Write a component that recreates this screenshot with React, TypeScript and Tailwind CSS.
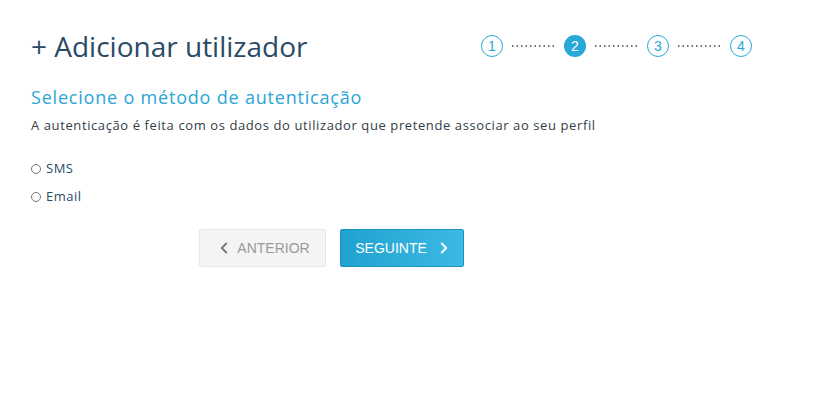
import { ChevronLeft, ChevronRight } from 'lucide-react'

const steps = [1, 2, 3, 4]
const active = 2

function DottedLine() {
  return (
    <svg width="45" height="2" className="mx-[8px]">
      <line x1="1" y1="1" x2="45" y2="1" stroke="#3d4a55" strokeWidth="1.5" strokeDasharray="1.5 3" />
    </svg>
  )
}

function Stepper() {
  return (
    <div className="flex items-center">
      {steps.map((n, i) => (
        <div key={n} className="flex items-center">
          {i > 0 && <DottedLine />}
          <div
            className={
              n === active
                ? 'flex h-[22px] w-[22px] items-center justify-center rounded-full bg-[#27a9d8] text-[14px] text-white'
                : 'flex h-[22px] w-[22px] items-center justify-center rounded-full border border-[#27a9d8] text-[14px] text-[#27a9d8]'
            }
            style={{ fontFamily: '"Liberation Sans", Arial, sans-serif' }}
          >
            {n}
          </div>
        </div>
      ))}
    </div>
  )
}

export default function App() {
  return (
    <div className="min-h-[416px] w-[822px] bg-white pl-[31px] pt-[29px] font-['Open_Sans',sans-serif]">
      <div className="flex w-[721px] items-center justify-between">
        <h1 className="text-[28px] leading-[34px] text-[#2a4b66]">+ Adicionar utilizador</h1>
        <Stepper />
      </div>

      <h2 className="mt-[22px] text-[18px] leading-[24px] tracking-[0.8px] text-[#2aa5d6]">
        Selecione o método de autenticação
      </h2>
      <p className="mt-[7px] text-[13px] leading-[18px] tracking-[0.6px] text-[#333d47]">
        A autenticação é feita com os dados do utilizador que pretende associar ao seu perfil
      </p>

      <div className="mt-[26px] flex flex-col gap-[10px] text-[13px] tracking-[0.5px] text-[#2a4b66]">
        <label className="flex h-[18px] items-center gap-[5px]">
          <span className="h-[10px] w-[10px] rounded-full border border-[#777]" />
          SMS
        </label>
        <label className="flex h-[18px] items-center gap-[5px]">
          <span className="h-[10px] w-[10px] rounded-full border border-[#777]" />
          Email
        </label>
      </div>

      <div
        className="ml-[168px] mt-[23px] flex gap-[14px] text-[14px]"
        style={{ fontFamily: '"Liberation Sans", Arial, sans-serif' }}
      >
        <button className="flex h-[38px] w-[127px] items-center justify-center gap-[4px] rounded-[2px] border border-[#e6e6e6] bg-[#f4f4f4] text-[#9a9a9a]">
          <ChevronLeft size={18} strokeWidth={2.5} className="text-[#777]" />
          ANTERIOR
        </button>
        <button className="flex h-[38px] w-[124px] items-center justify-center gap-[8px] rounded-[2px] border border-[#1b94c2] bg-gradient-to-r from-[#1fa2cf] to-[#3cb9e4] pl-[4px] text-white">
          SEGUINTE
          <ChevronRight size={18} strokeWidth={2.5} />
        </button>
      </div>
    </div>
  )
}
